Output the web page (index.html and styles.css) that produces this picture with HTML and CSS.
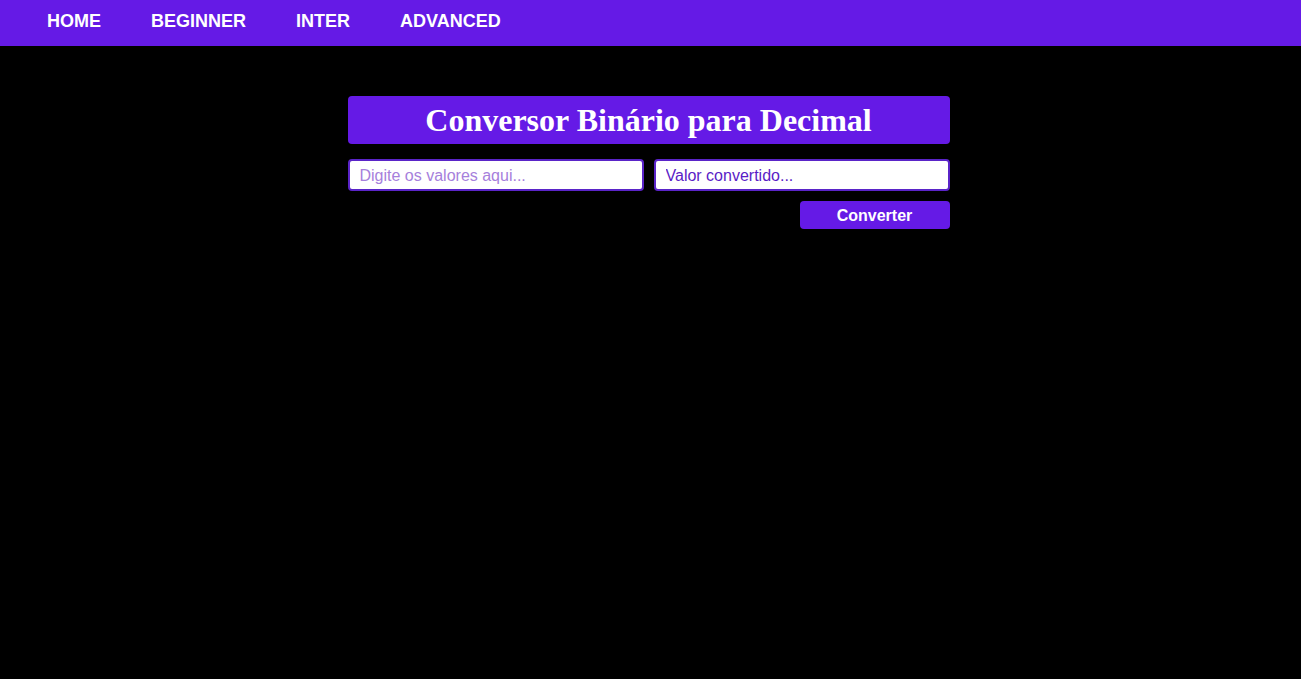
FILE: index.html
```html
<!DOCTYPE html>
<html lang="pt-BR">
<head>
<meta charset="utf-8">
<title>Conversor Binário para Decimal</title>
<link rel="stylesheet" href="styles.css">
</head>
<body>
<nav class="topnav">
  <a class="nav-link" href="#">HOME</a>
  <a class="nav-link" href="#">BEGINNER</a>
  <a class="nav-link" href="#">INTER</a>
  <a class="nav-link" href="#">ADVANCED</a>
</nav>
<main class="converter">
  <h1 class="title">Conversor Binário para Decimal</h1>
  <div class="fields">
    <input class="field" type="text" placeholder="Digite os valores aqui...">
    <input class="field field-out" type="text" placeholder="Valor convertido..." readonly>
  </div>
  <div class="actions">
    <button class="btn" type="button">Converter</button>
  </div>
</main>
</body>
</html>
```
FILE: styles.css
```css
* { box-sizing: border-box; }
html, body {
  margin: 0;
  padding: 0;
  background: #000;
  font-family: "Liberation Sans", Arial, sans-serif;
}
.topnav {
  height: 46px;
  background: #651ae6;
  display: flex;
  align-items: center;
  padding: 0 22px;
}
.nav-link {
  color: #fff;
  text-decoration: none;
  font-weight: bold;
  font-size: 18px;
  padding: 0 25px;
  line-height: 1;
  margin-top: -5px;
}
.converter {
  width: 602px;
  margin: 50px auto 0;
  position: relative;
  left: -2px;
}
.title {
  margin: 0;
  height: 48px;
  background: #651ae6;
  border-radius: 4px;
  color: #fff;
  font-family: "Liberation Serif", "Times New Roman", serif;
  font-size: 32px;
  font-weight: bold;
  text-align: center;
  line-height: 48px;
}
.fields {
  display: flex;
  gap: 10px;
  margin-top: 15px;
}
.field {
  flex: 1;
  height: 32px;
  border: 2px solid #5a24c8;
  border-radius: 4px;
  background: #fff;
  padding: 2px 10px 0;
  font-family: "Liberation Sans", Arial, sans-serif;
  font-size: 16px;
  color: #5a1cc6;
  outline: none;
}
.field::placeholder { color: #a680dc; }
.field-out::placeholder { color: #5a1cc6; }
.actions {
  display: flex;
  justify-content: flex-end;
  margin-top: 10px;
}
.btn {
  width: 150px;
  height: 28px;
  border: none;
  border-radius: 4px;
  background: #651ae6;
  color: #fff;
  font-family: "Liberation Sans", Arial, sans-serif;
  font-weight: bold;
  font-size: 16px;
  padding: 2px 0 0;
}
```
